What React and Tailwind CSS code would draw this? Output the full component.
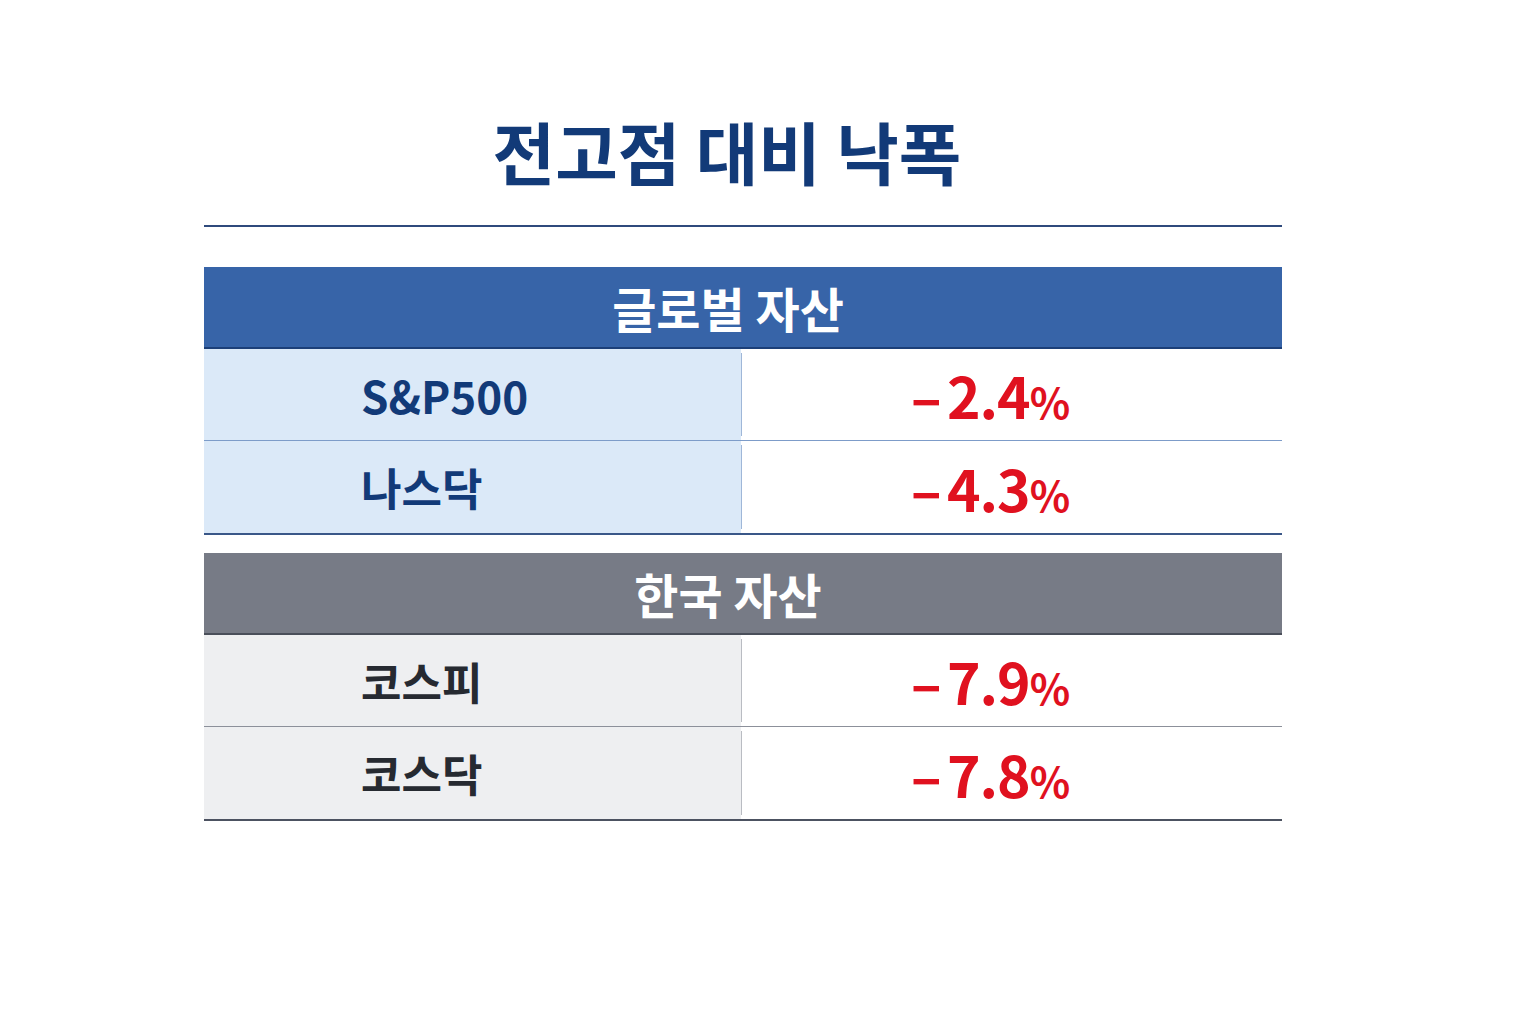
const font = { fontFamily: '"Noto Sans CJK KR", "Noto Sans", sans-serif' };

function Row({ label, value, tone, last }) {
  const blue = tone === 'blue';
  return (
    <div className={`flex h-[92px] ${last ? '' : blue ? 'border-b border-[#7d9cc9]' : 'border-b border-[#8c909a]'}`}>
      <div className={`w-[537px] flex items-center pl-[157px] text-[44px] font-bold ${blue ? 'bg-[#dbe9f8] text-[#123a78]' : 'bg-[#eeeff1] text-[#262a31]'}`}>
        <span className="leading-none">{label}</span>
      </div>
      <div className={`w-px my-[4px] ${blue ? 'bg-[#9fb7d8]' : 'bg-[#b9bcc2]'}`} />
      <div className="flex-1 flex items-center justify-center pr-[44px] bg-white">
        <span className="leading-none font-bold text-[#e0111f] text-[57px] tracking-[-1px]">
          <span className="mr-[6px]">–</span>
          {value}
          <span className="text-[42px] font-semibold">%</span>
        </span>
      </div>
    </div>
  );
}

function Group({ title, tone, rows }) {
  const blue = tone === 'blue';
  return (
    <div className={`border-b-2 ${blue ? 'border-[#3a5788]' : 'border-[#4c5261]'}`}>
      <div className={`h-[82px] flex items-center justify-center pr-[30px] border-b-2 ${blue ? 'bg-[#3764a8] border-[#1c3f78]' : 'bg-[#777b86] border-[#4a4f5a]'}`}>
        <span className="text-white text-[48px] font-bold leading-none">{title}</span>
      </div>
      {rows.map((r, i) => (
        <Row key={r.label} label={r.label} value={r.value} tone={tone} last={i === rows.length - 1} />
      ))}
    </div>
  );
}

export default function App() {
  return (
    <div className="w-[1536px] h-[1024px] bg-white" style={font}>
      <div className="w-[1078px] ml-[204px] pt-[117px]">
        <h1 className="text-center text-[68px] font-bold text-[#123a78] leading-none pr-[32px] h-[91px]">전고점 대비 낙폭</h1>
        <div className="h-[2px] bg-[#2f4a7c] mt-[17px]" />
        <div className="mt-[40px]">
          <Group
            title="글로벌 자산"
            tone="blue"
            rows={[
              { label: 'S&P500', value: '2.4' },
              { label: '나스닥', value: '4.3' },
            ]}
          />
        </div>
        <div className="mt-[18px]">
          <Group
            title="한국 자산"
            tone="gray"
            rows={[
              { label: '코스피', value: '7.9' },
              { label: '코스닥', value: '7.8' },
            ]}
          />
        </div>
      </div>
    </div>
  );
}
